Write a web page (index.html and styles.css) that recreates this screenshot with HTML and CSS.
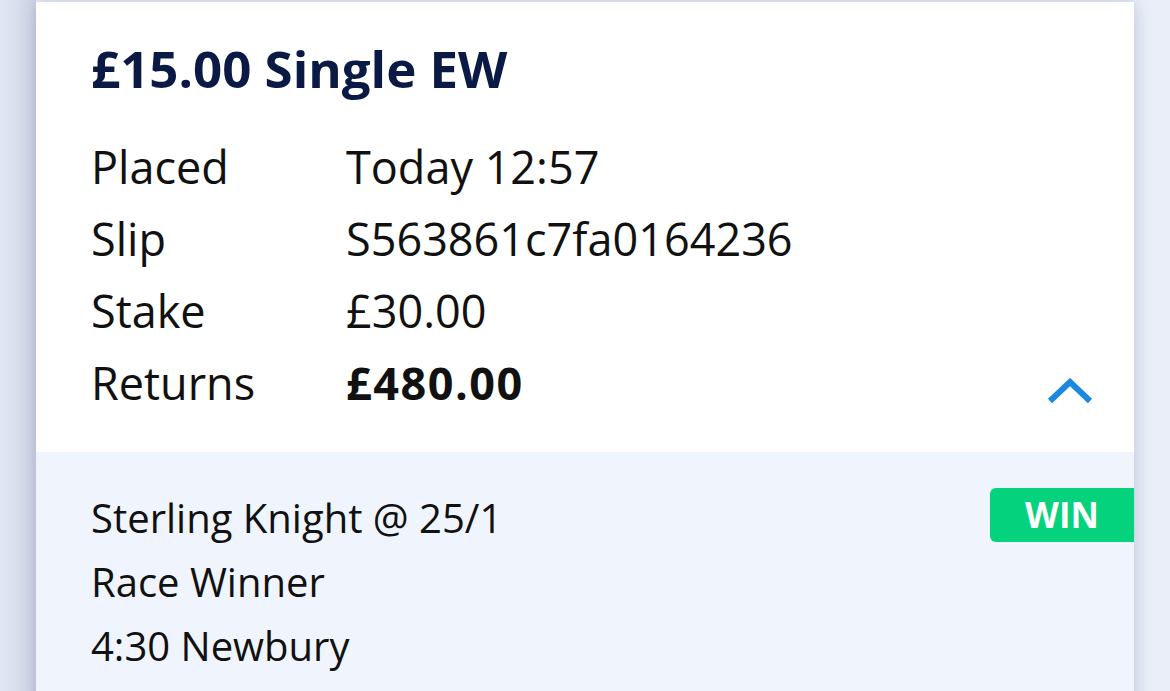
FILE: index.html
```html
<!DOCTYPE html>
<html lang="en">
<head>
    <meta charset="UTF-8">
    <meta name="viewport" content="width=device-width, initial-scale=1.0">
    <title>My Bets</title>
    <link rel="stylesheet" href="styles.css">
</head>
<body>
    <div id="bets-list">
        <div class="bet-card">
            <div class="bet-summary">
                <h1 class="bet-title">£15.00 Single EW</h1>

                <div class="bet-row">
                    <span class="bet-label">Placed</span>
                    <span class="bet-value">Today 12:57</span>
                </div>
                <div class="bet-row">
                    <span class="bet-label">Slip</span>
                    <span class="bet-value">S563861c7fa0164236</span>
                </div>
                <div class="bet-row">
                    <span class="bet-label">Stake</span>
                    <span class="bet-value">£30.00</span>
                </div>
                <div class="bet-row">
                    <span class="bet-label">Returns</span>
                    <span class="bet-value returns">£480.00</span>
                    <!-- collapse toggle -->
                    <svg class="toggle" width="46" height="26" viewBox="0 0 46 26">
                        <path d="M3 23 L23 4 L43 23" fill="none" stroke="#1a88e1" stroke-width="6"/>
                    </svg>
                </div>
            </div>

            <div class="bet-leg">
                <div class="leg-info">
                    <p>Sterling Knight @ 25/1</p>
                    <p>Race Winner</p>
                    <p>4:30 Newbury</p>
                </div>
                <span class="result-badge">WIN</span>
            </div>
        </div>
    </div>
</body>
</html>
```

FILE: styles.css
```css
/* Page */
body {
    margin: 0;
    padding: 0;
    background: #e9eef9;
    font-family: 'Open Sans', 'Noto Sans', sans-serif;
    color: #111;
    overflow: hidden;
}

#bets-list {
    padding: 2px 36px 0 36px;
    background: linear-gradient(90deg, #e2e7f5 0px, #cfd4e5 36px, transparent 36px);
}

.bet-card {
    background: #fff;
    box-shadow: 0 0 16px rgba(70, 80, 120, 0.28);
    min-height: 700px;
}

/* Top part of the card */
.bet-summary {
    padding: 36px 41px 34px 55px;
}

.bet-title {
    margin: 0 0 32px 0;
    font-size: 51px;
    line-height: 60px;
    font-weight: 700;
    color: #0b1a44;
}

.bet-row {
    display: flex;
    align-items: center;
    height: 72px;
    font-size: 45px;
}

.bet-label {
    width: 255px;
}

.returns {
    font-weight: 700;
    letter-spacing: 1.5px;
}

.toggle {
    margin-left: auto;
    align-self: flex-end;
    margin-bottom: 14px;
}

/* Leg details */
.bet-leg {
    display: flex;
    align-items: flex-start;
    background: #f0f5fd;
    padding: 34px 0 0 55px;
    min-height: 300px;
}

.leg-info {
    flex: 1;
}

.leg-info p {
    margin: 0;
    font-size: 40px;
    line-height: 64px;
}

.result-badge {
    margin-top: 2px;
    width: 144px;
    height: 54px;
    line-height: 54px;
    text-align: center;
    background: #05d27c;
    color: #fff;
    font-weight: 700;
    font-size: 35px;
    border-radius: 6px 0 0 6px;
}
```
